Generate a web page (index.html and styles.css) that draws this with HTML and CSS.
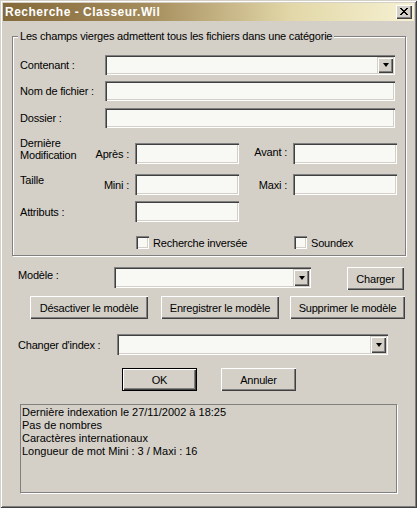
FILE: index.html
```html
<!DOCTYPE html>
<html lang="fr">
<head>
<meta charset="utf-8">
<title>Recherche - Classeur.Wil</title>
<link rel="stylesheet" href="styles.css">
</head>
<body>
<div class="window">
  <div class="titlebar">
    <span class="title">Recherche - Classeur.Wil</span>
    <span class="close">
      <svg width="8" height="7" viewBox="0 0 8 7" shape-rendering="crispEdges">
        <path d="M0 0h2v1h-2zM6 0h2v1h-2zM1 1h2v1h-2zM5 1h2v1h-2zM2 2h4v1h-4zM3 3h2v1h-2zM2 4h4v1h-4zM1 5h2v1h-2zM5 5h2v1h-2zM0 6h2v1h-2zM6 6h2v1h-2z" fill="#000"/>
      </svg>
    </span>
  </div>
  <div class="content">
    <div class="group">
      <span class="legend">Les champs vierges admettent tous les fichiers dans une catégorie</span>
      <div class="row r1">
        <span class="lbl w85">Contenant :</span>
        <div class="field combo w290"><span class="arrow"><i></i></span></div>
      </div>
      <div class="row r2">
        <span class="lbl w85">Nom de fichier :</span>
        <div class="field w290"></div>
      </div>
      <div class="row r3">
        <span class="lbl w85">Dossier :</span>
        <div class="field w290"></div>
      </div>
      <div class="row r4">
        <span class="lbl w70 top2">Dernière<br>Modification</span>
        <span class="lbl rlbl w45">Après :</span>
        <div class="field w104"></div>
        <span class="lbl rlbl w54 up">Avant :</span>
        <div class="field w104"></div>
      </div>
      <div class="row r5">
        <span class="lbl w70 top1">Taille</span>
        <span class="lbl rlbl w45">Mini :</span>
        <div class="field w104"></div>
        <span class="lbl rlbl w54">Maxi :</span>
        <div class="field w104"></div>
      </div>
      <div class="row r6">
        <span class="lbl w115">Attributs :</span>
        <div class="field w104"></div>
      </div>
      <div class="row r7">
        <label class="check w158"><span class="box"></span>Recherche inversée</label>
        <label class="check"><span class="box"></span>Soundex</label>
      </div>
    </div>

    <div class="row m1">
      <span class="lbl w96 mtop">Modèle :</span>
      <div class="field combo w197"><span class="arrow"><i></i></span></div>
      <button class="btn charger">Charger</button>
    </div>

    <div class="row m2">
      <button class="btn w118">Désactiver le modèle</button>
      <button class="btn w118">Enregistrer le modèle</button>
      <button class="btn w115">Supprimer le modèle</button>
    </div>

    <div class="row m3">
      <span class="lbl w99">Changer d'index :</span>
      <div class="field combo w271"><span class="arrow"><i></i></span></div>
    </div>

    <div class="row m4">
      <button class="btn default w75">OK</button>
      <button class="btn w75">Annuler</button>
    </div>

    <div class="info">
      <div>Dernière indexation le 27/11/2002 à 18:25</div>
      <div>Pas de nombres</div>
      <div>Caractères internationaux</div>
      <div>Longueur de mot Mini : 3 / Maxi : 16</div>
    </div>
  </div>
</div>
</body>
</html>
```
FILE: styles.css
```css
html, body {
  margin: 0;
  padding: 0;
  background: #d4d0c8;
}
body {
  font-family: "Liberation Sans", Arial, sans-serif;
  font-size: 11px;
  letter-spacing: -0.2px;
  color: #000;
}
.window {
  box-sizing: border-box;
  width: 417px;
  height: 508px;
  padding: 3px;
  background: #d4d0c8;
  box-shadow: inset 1px 1px 0 #d4d0c8, inset -1px -1px 0 #404040,
              inset 2px 2px 0 #ffffff, inset -2px -2px 0 #808080;
}
.titlebar {
  height: 18px;
  display: flex;
  align-items: center;
  justify-content: space-between;
  padding-left: 2px;
  padding-right: 2px;
  background: linear-gradient(to right, #84693a 0%, #a58c5c 35%, #e2d7a8 70%, #f6f1d2 100%);
}
.title {
  color: #fff;
  font-weight: bold;
  font-size: 12px;
  letter-spacing: 0.5px;
}
.close {
  box-sizing: border-box;
  width: 16px;
  height: 14px;
  background: #d4d0c8;
  box-shadow: inset 1px 1px 0 #fff, inset -1px -1px 0 #404040, inset -2px -2px 0 #808080;
  display: flex;
  align-items: center;
  justify-content: center;
  padding-bottom: 1px;
  padding-right: 1px;
}
.close svg { display: block; }

.content {
  display: flex;
  flex-direction: column;
}
.group {
  position: relative;
  box-sizing: border-box;
  margin-top: 15px;
  margin-left: 9px;
  width: 394px;
  border: 1px solid #808080;
  box-shadow: 1px 1px 0 #fff, inset 1px 1px 0 #fff;
  padding: 0 0 6px 7px;
}
.legend {
  position: absolute;
  top: -7px;
  left: 5px;
  padding: 0 2px;
  background: #d4d0c8;
  line-height: 13px;
}
.row {
  display: flex;
  align-items: center;
}
.r1 { margin-top: 18px; height: 20px; }
.r2 { margin-top: 6px; height: 20px; }
.r3 { margin-top: 7px; height: 20px; }
.r4 { margin-top: 15px; height: 21px; }
.r5 { margin-top: 10px; height: 21px; }
.r6 { margin-top: 6px; height: 21px; }
.r7 { margin-top: 14px; height: 13px; padding-left: 116px; }

.lbl {
  line-height: 12px;
  white-space: nowrap;
  flex: none;
}
.rlbl {
  text-align: right;
  padding-right: 6px;
  box-sizing: border-box;
}
.top2 { align-self: flex-start; margin-top: -6px; }
.top1 { align-self: flex-start; }
.up { margin-bottom: 4px; }
.w45 { width: 45px; }
.w54 { width: 54px; }
.w70 { width: 70px; }
.w85 { width: 85px; }
.w96 { width: 96px; }
.w99 { width: 99px; }
.w104 { width: 104px; }
.w115 { width: 115px; }
.w118 { width: 118px; }
.w158 { width: 158px; }
.w197 { width: 197px; }
.w271 { width: 271px; }
.w290 { width: 290px; }
.w75 { width: 75px; }

.field {
  box-sizing: border-box;
  height: 100%;
  flex: none;
  background: #f8f8f4;
  box-shadow: inset 1px 1px 0 #808080, inset 2px 2px 0 #404040,
              inset -1px -1px 0 #ffffff, inset -2px -2px 0 #d4d0c8;
  display: flex;
  justify-content: flex-end;
  padding: 2px;
}
.arrow {
  box-sizing: border-box;
  width: 16px;
  height: 100%;
  background: #d4d0c8;
  box-shadow: inset 1px 1px 0 #d4d0c8, inset 2px 2px 0 #fff,
              inset -1px -1px 0 #404040, inset -2px -2px 0 #808080;
  display: flex;
  align-items: center;
  justify-content: center;
}
.arrow i {
  display: block;
  width: 0;
  height: 0;
  border-left: 3.5px solid transparent;
  border-right: 3.5px solid transparent;
  border-top: 4px solid #000;
  margin-left: 1px;
}

.check {
  display: flex;
  align-items: center;
  flex: none;
  line-height: 12px;
}
.box {
  box-sizing: border-box;
  width: 13px;
  height: 13px;
  margin-right: 4px;
  background: #f8f8f4;
  box-shadow: inset 1px 1px 0 #808080, inset 2px 2px 0 #404040,
              inset -1px -1px 0 #ffffff, inset -2px -2px 0 #d4d0c8;
  flex: none;
}

.btn {
  box-sizing: border-box;
  height: 23px;
  padding: 0;
  margin: 0;
  border: none;
  font: inherit;
  letter-spacing: -0.2px;
  color: #000;
  background: #d4d0c8;
  box-shadow: inset 1px 1px 0 #fff, inset -1px -1px 0 #404040, inset -2px -2px 0 #808080;
  flex: none;
  line-height: 12px;
}
.btn.default {
  border: 1px solid #000;
}

.m1 { margin-top: 11px; height: 23px; padding-left: 15px; align-items: flex-start; }
.m1 .field { height: 21px; }
.mtop { margin-top: 2px; }
.charger { margin-left: 36px; width: 57px; }
.m2 { margin-top: 6px; height: 23px; padding-left: 27px; }
.m2 .btn + .btn { margin-left: 13px; }
.m2 .btn:last-child { margin-left: 11px; }
.m3 { margin-top: 15px; height: 21px; padding-left: 15px; }
.m4 { margin-top: 13px; height: 23px; padding-left: 119px; }
.m4 .btn + .btn { margin-left: 24px; }

.info {
  box-sizing: border-box;
  margin-top: 13px;
  margin-left: 17px;
  width: 377px;
  height: 89px;
  border: 1px solid #808080;
  box-shadow: 1px 1px 0 #fff;
  padding: 1px 1px 0;
  line-height: 13px;
  font-size: 11px;
  letter-spacing: 0;
}
```
